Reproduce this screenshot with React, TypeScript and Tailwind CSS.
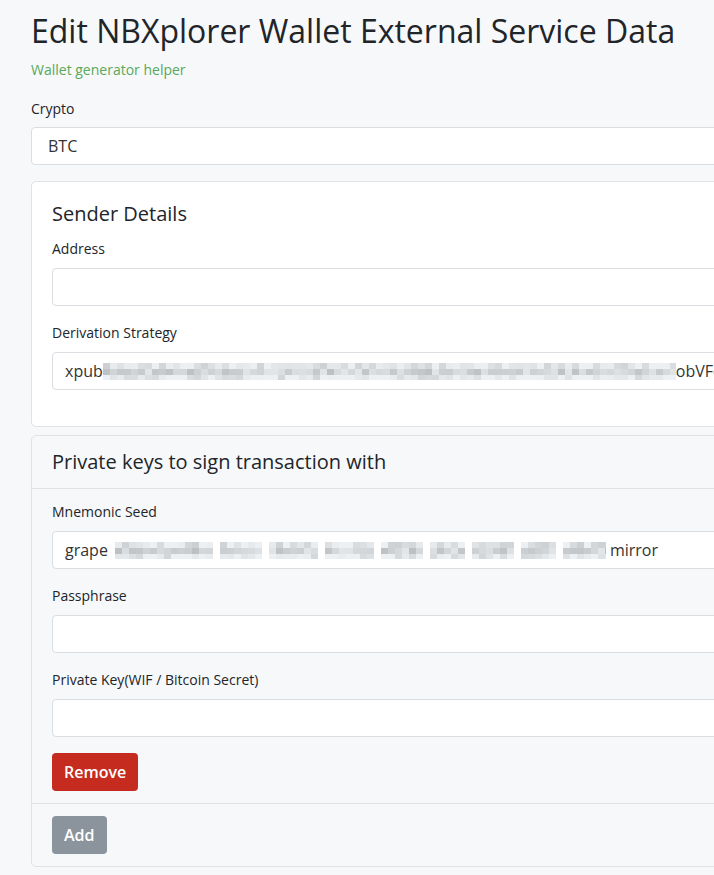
import React from "react";

function mulberry(seed: number) {
  let a = seed;
  return () => {
    a |= 0;
    a = (a + 0x6d2b79f5) | 0;
    let t = Math.imul(a ^ (a >>> 15), 1 | a);
    t = (t + Math.imul(t ^ (t >>> 7), 61 | t)) ^ t;
    return ((t ^ (t >>> 14)) >>> 0) / 4294967296;
  };
}

function Blur({ w, seed, gaps = [] }: { w: number; seed: number; gaps?: [number, number][] }) {
  const r = mulberry(seed);
  const cw = 7;
  const rowsH = [6, 6, 5];
  const cols = Math.ceil(w / cw);
  const rects: React.ReactNode[] = [];
  for (let c = 0; c < cols; c++) {
    const x = c * cw;
    if (gaps.some(([a, b]) => x >= a && x < b)) continue;
    let y = 0;
    rowsH.forEach((h, ri) => {
      const base = ri === 1 ? 192 : ri === 0 ? 208 : 214;
      const l = Math.round(base + r() * 38);
      const v = Math.min(l, 240);
      rects.push(
        <rect key={`${c}-${ri}`} x={x} y={y} width={cw} height={h} fill={`rgb(${v - 3},${v},${v + 3})`} />
      );
      y += h;
    });
  }
  return (
    <svg width={w} height={17} viewBox={`0 0 ${w} 17`} className="shrink-0">
      {rects}
    </svg>
  );
}

const font = { fontFamily: '"Open Sans", "Noto Sans", sans-serif' };

function Label({ children }: { children: React.ReactNode }) {
  return <div className="text-[14px] leading-[21px] text-[#212529] mb-[9px]">{children}</div>;
}

function Field({ children, wide }: { children?: React.ReactNode; wide?: boolean }) {
  return (
    <div
      className={`h-[38px] w-full bg-white border border-[#dadde1] rounded-[4px] ${
        wide ? "px-4" : "px-3"
      } flex items-center text-[16px] text-[#333] whitespace-nowrap overflow-hidden`}
    >
      {children}
    </div>
  );
}

export default function App() {
  return (
    <div className="w-[714px] min-h-[875px] bg-[#f7f8fa] overflow-hidden" style={font}>
      <div className="w-[820px] pl-[31px] pt-[12px] pb-[9px]">
        <h1 className="text-[32px] leading-[1.2] text-[#212529] font-normal">
          Edit NBXplorer Wallet External Service Data
        </h1>
        <div className="text-[14px] leading-[21px] text-[#58a95a] mt-[9px] mb-[18px]">Wallet generator helper</div>

        <div className="mb-4">
          <div className="text-[14px] leading-[21px] text-[#212529] mb-2">Crypto</div>
          <Field wide>BTC</Field>
        </div>

        <div className="bg-white border border-[#e0e2e5] rounded-[5px] px-5 pt-5 pb-5 mb-2">
          <h5 className="text-[20px] leading-[24px] text-[#212529] mb-3">Sender Details</h5>
          <div className="mb-4">
            <Label>Address</Label>
            <Field />
          </div>
          <div className="mb-4">
            <Label>Derivation Strategy</Label>
            <Field>
              <span>xpub</span>
              <Blur w={573} seed={7} />
              <span>obVFqhK2mZtR8sW</span>
            </Field>
          </div>
        </div>

        <div className="bg-[#f7f8fa] border border-[#e0e2e5] rounded-[5px]">
          <div className="px-5 py-[14px] border-b border-[#e0e2e5]">
            <h5 className="text-[20px] leading-[24px] text-[#212529]">Private keys to sign transaction with</h5>
          </div>
          <div className="px-5 pt-3 pb-3 border-b border-[#e0e2e5]">
            <div className="mb-4">
              <Label>Mnemonic Seed</Label>
              <Field>
                <span>grape</span>
                <Blur
                  w={498}
                  seed={3}
                  gaps={[
                    [0, 6],
                    [50, 56],
                    [105, 112],
                    [154, 160],
                    [210, 217],
                    [266, 273],
                    [315, 322],
                    [357, 364],
                    [406, 413],
                    [448, 455],
                  ]}
                />
                <span className="ml-[4px]">mirror</span>
              </Field>
            </div>
            <div className="mb-4">
              <Label>Passphrase</Label>
              <Field />
            </div>
            <div className="mb-4">
              <Label>Private Key(WIF / Bitcoin Secret)</Label>
              <Field />
            </div>
            <button className="h-[38px] px-3 rounded-[4px] bg-[#c52b1e] text-white text-[16px] font-semibold leading-[24px]">
              Remove
            </button>
          </div>
          <div className="px-5 py-3">
            <button className="h-[38px] px-3 rounded-[4px] bg-[#8b949c] text-white text-[16px] font-semibold leading-[24px]">
              Add
            </button>
          </div>
        </div>
      </div>
    </div>
  );
}
